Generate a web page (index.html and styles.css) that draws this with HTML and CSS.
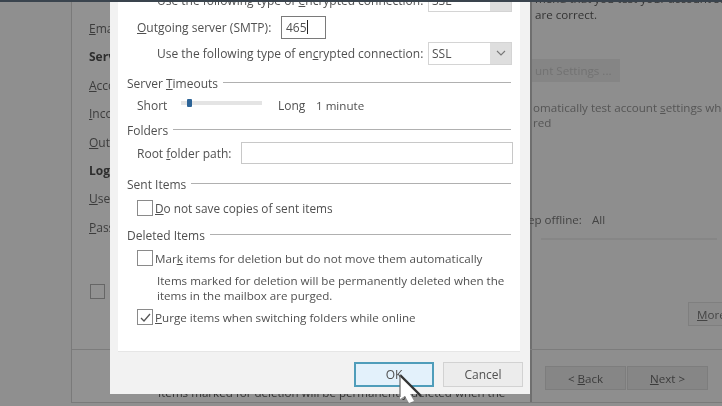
FILE: index.html
```html
<!DOCTYPE html>
<html lang="en">
<head>
  <meta charset="UTF-8">
  <meta name="viewport" content="width=device-width, initial-scale=1.0">
  <title>More Settings</title>
  <link rel="stylesheet" href="styles.css">
</head>
<body>
  <div class="screen">
    <!-- Account window behind the dialog -->
    <div class="backdrop">
      <div class="back-labels">
        <div class="back-label"><u>E</u>mail</div>
        <div class="back-label bold">Server</div>
        <div class="back-label"><u>A</u>ccount</div>
        <div class="back-label"><u>I</u>ncoming</div>
        <div class="back-label"><u>O</u>utgoing</div>
        <div class="back-label bold">Logon</div>
        <div class="back-label"><u>U</u>ser</div>
        <div class="back-label"><u>P</u>assword</div>
        <div class="back-check"></div>
      </div>
      <div class="back-right">
        <div class="back-top">mend that you test your account se</div>
        <div class="back-correct">are correct.</div>
        <div class="back-settings">unt Settings ...</div>
        <div class="back-auto">omatically test account <u>s</u>ettings whe<br>red</div>
        <div class="back-offline"><span>ep offline:</span><span>All</span></div>
        <div class="back-slider"></div>
        <div class="back-more"><u>M</u>ore</div>
        <div class="back-nav">
          <div class="back-btn">&lt; <u>B</u>ack</div>
          <div class="back-btn"><u>N</u>ext &gt;</div>
        </div>
      </div>
      <div class="back-ghost">Items marked for deletion will be permanently deleted when the</div>
      <div class="back-rule"></div>
    </div>

    <!-- Settings dialog -->
    <div class="dialog">
      <div class="panel">
        <div class="row indent-2 first">
          <span class="select-label">Use the following type of <u>e</u>ncrypted connection:</span>
          <div class="select"><span>SSL</span><i class="arrow"></i></div>
        </div>
        <div class="row indent-1 smtp">
          <span class="smtp-label"><u>O</u>utgoing server (SMTP):</span>
          <div class="port"><span>465</span><i class="caret"></i></div>
        </div>
        <div class="row indent-2 enc">
          <span class="select-label">Use the following type of en<u>c</u>rypted connection:</span>
          <div class="select">
            <span>SSL</span>
            <i class="arrow">
              <svg width="10" height="6" viewBox="0 0 10 6"><path d="M1 1l4 4 4-4" fill="none" stroke="#777" stroke-width="1.1"/></svg>
            </i>
          </div>
        </div>

        <div class="heading timeouts"><span>Server <u>T</u>imeouts</span></div>
        <div class="row indent-1">
          <span class="short">Short</span>
          <div class="slider"><i class="thumb"></i></div>
          <span class="long">Long</span>
          <span class="minute">1 minute</span>
        </div>

        <div class="heading folders"><span>Folders</span></div>
        <div class="row indent-1 root">
          <span class="root-label">Root <u>f</u>older path:</span>
          <div class="path"></div>
        </div>

        <div class="heading sent"><span>Sent Items</span></div>
        <div class="row indent-1 sent-row">
          <i class="check"></i>
          <span><u>D</u>o not save copies of sent items</span>
        </div>

        <div class="heading deleted"><span>Deleted Items</span></div>
        <div class="row indent-1 mark">
          <i class="check"></i>
          <span>Mar<u>k</u> items for deletion but do not move them automatically</span>
        </div>
        <p class="note">Items marked for deletion will be permanently deleted when the<br>items in the mailbox are purged.</p>
        <div class="row indent-1 purge">
          <i class="check">
            <svg width="13" height="13" viewBox="0 0 13 13"><path d="M2 7l3 3 6-7" fill="none" stroke="#555" stroke-width="1.3"/></svg>
          </i>
          <span><u>P</u>urge items when switching folders while online</span>
        </div>
      </div>
      <div class="footer">
        <div class="btn ok">OK</div>
        <div class="btn">Cancel</div>
      </div>
    </div>

    <svg class="pointer" width="26" height="32" viewBox="0 0 26 32">
      <path d="M2 2v24l5-3 4 7 5-2-4-7 8-1z" fill="#fff"/>
      <path d="M2 2l21 21" fill="none" stroke="#333" stroke-width="2.4"/>
      <path d="M2 2v22" fill="none" stroke="#666" stroke-width="1.2"/>
    </svg>

    <div class="topline"></div>
  </div>
</body>
</html>
```

FILE: styles.css
```css
* {
  box-sizing: border-box;
}
html, body {
  margin: 0;
  padding: 0;
}
body {
  font-family: "Open Sans", "Noto Sans", Arial, sans-serif;
  font-size: 12px;
  color: #505050;
}
u {
  text-underline-offset: 1px;
}
i {
  display: block;
}
.screen {
  position: relative;
  width: 722px;
  height: 406px;
  overflow: hidden;
  background-color: #8f8f8f;
  filter: blur(0.6px);
}
.topline {
  position: absolute;
  left: 0;
  top: 0;
  width: 100%;
  height: 2px;
  background-color: #3a444e;
}

/* window behind */
.backdrop {
  position: absolute;
  left: 71px;
  top: 0;
  width: 660px;
  height: 403px;
  background-color: #929292;
  border: 1px solid #7a7a7a;
  border-top: none;
  color: #3c3c3c;
}
.back-labels {
  position: absolute;
  left: 17px;
  top: 18px;
  width: 60px;
}
.back-label {
  height: 28.4px;
  line-height: 22px;
  white-space: nowrap;
}
.bold {
  font-weight: 700;
  color: #2e2e2e;
}
.back-check {
  width: 15px;
  height: 15px;
  margin: 39px 0 0 1px;
  border: 1.5px solid #666;
}
.back-right {
  position: absolute;
  left: 458px;
  top: 0;
  right: 0;
  height: 100%;
  font-size: 11.6px;
  background-color: #8e8e8e;
  border-left: 2px solid #6f6f6f;
}
.back-top {
  position: absolute;
  left: 3px;
  top: -9px;
  white-space: nowrap;
  color: #333;
}
.back-correct {
  position: absolute;
  left: 3px;
  top: 7px;
  color: #333;
}
.back-settings {
  position: absolute;
  left: 0;
  top: 59px;
  width: 88px;
  height: 23px;
  padding-left: 3px;
  line-height: 24px;
  background-color: #858585;
  color: #727272;
  white-space: nowrap;
}
.back-auto {
  position: absolute;
  left: 1px;
  top: 100px;
  line-height: 15px;
  white-space: nowrap;
  color: #555;
}
.back-offline {
  position: absolute;
  left: -4px;
  top: 212px;
  display: flex;
  gap: 10px;
  color: #444;
}
.back-slider {
  position: absolute;
  left: 9px;
  top: 238px;
  width: 176px;
  height: 2px;
  background-color: #868686;
}
.back-more {
  position: absolute;
  left: 156px;
  top: 302px;
  width: 60px;
  height: 24px;
  padding-left: 8px;
  line-height: 24px;
  background-color: #8b8b8b;
  border: 1px solid #7f7f7f;
  color: #444;
}
.back-nav {
  position: absolute;
  left: 13px;
  top: 366px;
  display: flex;
  gap: 1px;
}
.back-btn {
  width: 81px;
  height: 24px;
  line-height: 24px;
  text-align: center;
  background-color: #868686;
  border: 1px solid #7d7d7d;
  color: #3c3c3c;
}
.back-ghost {
  position: absolute;
  left: 86px;
  top: 385px;
  font-size: 11.6px;
  white-space: nowrap;
  color: #333;
}
.back-rule {
  position: absolute;
  left: 0;
  right: 0;
  top: 349px;
  height: 1px;
  background-color: #7c7c7c;
}

/* dialog */
.dialog {
  position: absolute;
  left: 110px;
  top: -12px;
  width: 420px;
  height: 406px;
  background-color: #f2f2f2;
  padding-left: 8px;
}
.panel {
  width: 402px;
  height: 364px;
  padding: 1px 9px 0 9px;
  background-color: #fff;
  border-bottom: 1px solid #e6e6e6;
}
.row {
  display: flex;
  align-items: center;
  height: 22px;
  white-space: nowrap;
}
.indent-1 {
  padding-left: 10px;
}
.indent-2 {
  padding-left: 30px;
}
.smtp {
  margin-top: 5px;
}
.enc {
  margin-top: 4px;
}
.select-label {
  flex: none;
  width: 271px;
}
.smtp-label {
  flex: none;
  width: 144px;
}
.select {
  flex: none;
  display: flex;
  justify-content: space-between;
  width: 84px;
  height: 23px;
  padding-left: 3px;
  line-height: 21px;
  background-color: #fff;
  border: 1px solid #d4d4d4;
}
.arrow {
  display: flex;
  align-items: center;
  justify-content: center;
  width: 21px;
  background-color: #dedede;
}
.port {
  display: flex;
  align-items: center;
  width: 45px;
  height: 23px;
  padding-left: 4px;
  border: 1px solid #7a7a7a;
}
.caret {
  width: 1px;
  height: 14px;
  background-color: #222;
}
.heading {
  display: flex;
  align-items: center;
  gap: 5px;
  height: 22px;
  white-space: nowrap;
}
.heading::after {
  content: "";
  flex: 1;
  height: 1px;
  margin-top: -1px;
  background-color: #b0b0b0;
}
.timeouts {
  margin-top: 8px;
}
.short {
  width: 44px;
}
.slider {
  position: relative;
  width: 81px;
  height: 4px;
  margin: -4px 16px 0 0;
  background-color: #e4e4e4;
}
.thumb {
  position: absolute;
  left: 6px;
  top: -2px;
  width: 5px;
  height: 8px;
  background-color: #2d6497;
  border-radius: 1px;
}
.long {
  width: 38px;
}
.minute {
  font-size: 11.6px;
}
.folders {
  margin-top: 3px;
}
.root {
  margin-top: 1px;
}
.root-label {
  flex: none;
  width: 104px;
}
.path {
  flex: none;
  width: 272px;
  height: 22px;
  border: 1px solid #c8c8c8;
}
.sent {
  margin-top: 9px;
}
.sent-row {
  margin-top: 2px;
  font-size: 11.8px;
}
.check {
  flex: none;
  width: 16px;
  height: 16px;
  margin-right: 2px;
  padding: 1px;
  border: 1.5px solid #8a8a8a;
}
.deleted {
  margin-top: 5px;
}
.mark {
  margin-top: 1px;
  font-size: 11.65px;
}
.note {
  margin: 4px 0 0 30px;
  font-size: 11.6px;
  line-height: 15px;
  white-space: nowrap;
}
.purge {
  margin-top: 3px;
  font-size: 11.65px;
}
.footer {
  display: flex;
  gap: 9px;
  padding: 10px 0 0 236px;
}
.btn {
  width: 80px;
  height: 25px;
  line-height: 24px;
  text-align: center;
  background-color: #ececec;
  border: 1px solid #d2d2d2;
}
.ok {
  background-color: #e3f1fb;
  border: 2px solid #4f9dba;
  line-height: 22px;
}
.pointer {
  position: absolute;
  left: 398px;
  top: 373px;
}
```
